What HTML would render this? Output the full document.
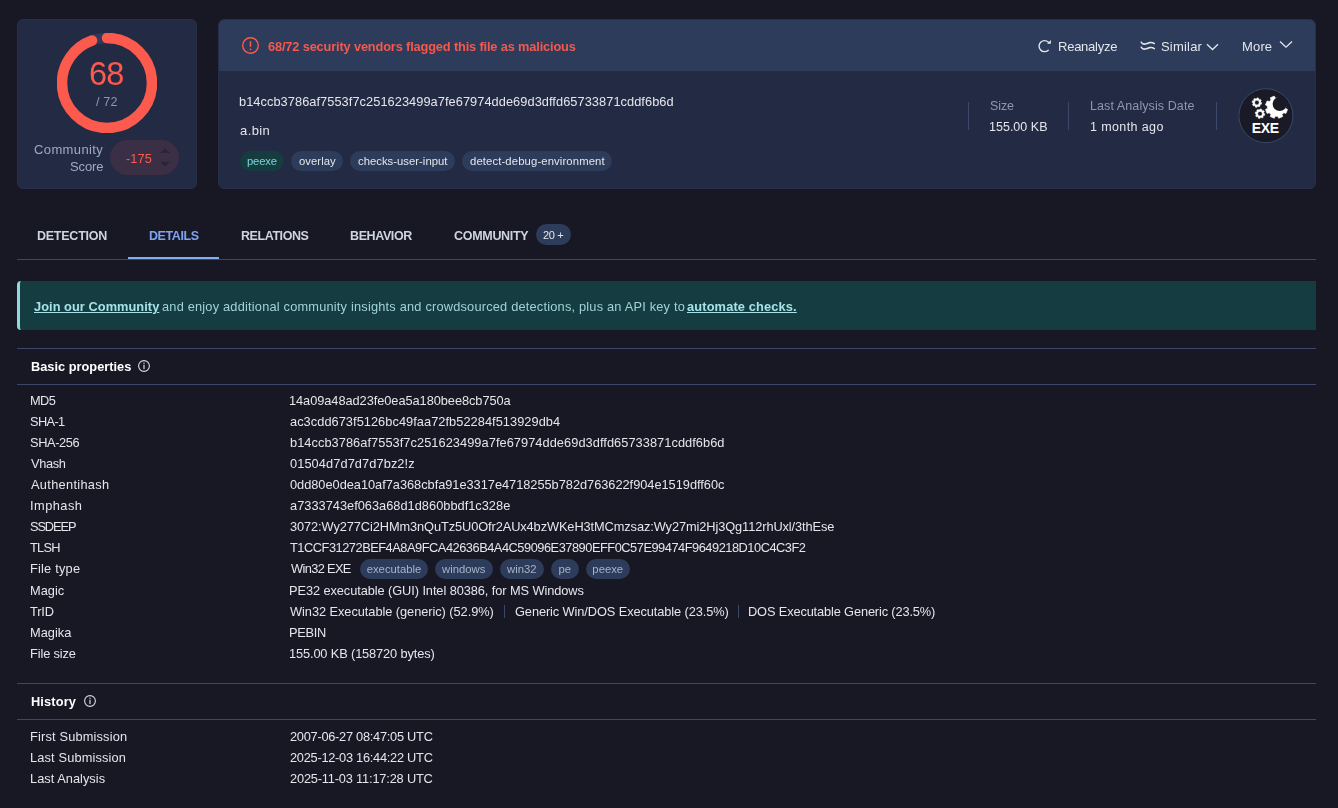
<!DOCTYPE html>
<html><head><meta charset="utf-8"><title>VirusTotal - File</title>
<style>
html,body{margin:0;padding:0;}
body{width:1338px;height:808px;overflow:hidden;background:#181724;position:relative;font-family:"Liberation Sans",sans-serif;}
.t{position:absolute;white-space:nowrap;will-change:transform;}
.box,.abs{position:absolute;}
</style></head><body>
<div class="box" style="left:17px;top:19px;width:180px;height:170px;background:#232a43;border-radius:6px;border:1px solid #262e49;box-sizing:border-box"></div>
<svg class="abs" style="left:57px;top:33px" width="100" height="100" viewBox="0 0 100 100">
<circle cx="50" cy="50" r="45" fill="none" stroke="#2e3a58" stroke-width="10.5"/>
<circle cx="50" cy="50" r="45" fill="none" stroke="#fd5a4e" stroke-width="10.5" stroke-linecap="round" stroke-dasharray="267.04 282.74" transform="rotate(-90 50 50)"/>
</svg>
<div class="t" style="left:89.38px;top:52.54px;font-size:32.5px;line-height:42px;font-weight:normal;color:#fd5a4e;letter-spacing:-0.850px;">68</div>
<div class="t" style="left:96.20px;top:94.07px;font-size:12.5px;line-height:16px;font-weight:normal;color:#8e97b1;letter-spacing:0.204px;">/ 72</div>
<div class="t" style="left:34.35px;top:141.10px;font-size:13px;line-height:17px;font-weight:normal;color:#a2aac0;letter-spacing:0.379px;">Community</div>
<div class="t" style="left:70.22px;top:157.90px;font-size:13px;line-height:17px;font-weight:normal;color:#a2aac0;letter-spacing:-0.131px;">Score</div>
<div class="box" style="left:110px;top:140px;width:69px;height:35px;background:#3a2f45;border-radius:18px"></div>
<div class="t" style="left:125.62px;top:150.36px;font-size:12.8px;line-height:17px;font-weight:normal;color:#fd5a4e;letter-spacing:0.096px;">-175</div>
<svg class="abs" style="left:159px;top:147px" width="12" height="21" viewBox="0 0 12 21"><path d="M1 6 L6 1.5 L11 6Z" fill="#2a2535"/><path d="M1 14.8 L6 19.5 L11 14.8Z" fill="#2a2535"/></svg>
<div class="box" style="left:218px;top:19px;width:1098px;height:170px;background:#232a43;border-radius:6px;overflow:hidden;border:1px solid #262e49;box-sizing:border-box"><div style="position:absolute;left:0;top:0;right:0;height:51px;background:#2d3c5b;border-bottom:1px solid #232b41"></div></div>
<svg class="abs" style="left:241px;top:36px" width="19" height="19" viewBox="0 0 19 19"><circle cx="9.5" cy="9.5" r="7.8" fill="none" stroke="#fd5a4e" stroke-width="1.4"/><path d="M9.5 5.2 V10.8" stroke="#fd5a4e" stroke-width="1.5"/><circle cx="9.5" cy="13.3" r="0.9" fill="#fd5a4e"/></svg>
<div class="t" style="left:267.95px;top:38.06px;font-size:12.8px;line-height:17px;font-weight:bold;color:#f5584d;letter-spacing:-0.152px;">68/72 security vendors flagged this file as malicious</div>
<svg class="abs" style="left:1037px;top:39px" width="16" height="15" viewBox="0 0 16 15"><path d="M11.28 11.19 A5.5 5.5 0 1 1 11.4 3.2" fill="none" stroke="#e4e6eb" stroke-width="1.4" stroke-linecap="round"/><path d="M13.9 1.1 V4.8 H10.1Z" fill="#e4e6eb"/></svg>
<div class="t" style="left:1058.26px;top:38.20px;font-size:13px;line-height:17px;font-weight:normal;color:#e4e6eb;letter-spacing:-0.246px;">Reanalyze</div>
<svg class="abs" style="left:1139px;top:40px" width="18" height="12" viewBox="0 0 18 12"><path d="M2.2 2.2 Q3.4 4.6 6.3 4 T11 2.5 Q13.6 2.2 15.3 3.6" fill="none" stroke="#e4e6eb" stroke-width="1.5" stroke-linecap="round"/><path d="M2.2 7.2 Q3.4 9.6 6.3 9 T11 7.5 Q13.6 7.2 15.3 8.6" fill="none" stroke="#e4e6eb" stroke-width="1.5" stroke-linecap="round"/></svg>
<div class="t" style="left:1160.62px;top:38.20px;font-size:13px;line-height:17px;font-weight:normal;color:#e4e6eb;letter-spacing:0.200px;">Similar</div>
<svg class="abs" style="left:1206px;top:43px" width="13" height="8" viewBox="0 0 13 8"><path d="M1 1.2 L6.5 6.5 L12 1.2" fill="none" stroke="#e4e6eb" stroke-width="1.3"/></svg>
<div class="t" style="left:1241.86px;top:38.20px;font-size:13px;line-height:17px;font-weight:normal;color:#e4e6eb;letter-spacing:0.162px;">More</div>
<svg class="abs" style="left:1279px;top:40px" width="14" height="9" viewBox="0 0 14 9"><path d="M1 1.5 L7 7.2 L13 1.5" fill="none" stroke="#e4e6eb" stroke-width="1.3"/></svg>
<div class="t" style="left:239.47px;top:93.46px;font-size:12.8px;line-height:17px;font-weight:normal;color:#e4e6eb;letter-spacing:0.057px;">b14ccb3786af7553f7c251623499a7fe67974dde69d3dffd65733871cddf6b6d</div>
<div class="t" style="left:239.88px;top:121.90px;font-size:13px;line-height:17px;font-weight:normal;color:#e4e6eb;letter-spacing:0.414px;">a.bin</div>
<div class="box" style="left:240px;top:151px;width:44px;height:20px;background:#153c3f;border-radius:10px"></div>
<div class="t" style="left:247.27px;top:153.58px;font-size:11.3px;line-height:15px;font-weight:normal;color:#80d2d8;letter-spacing:-0.202px;">peexe</div>
<div class="box" style="left:291px;top:151px;width:52px;height:20px;background:#2d3c5b;border-radius:10px"></div>
<div class="t" style="left:298.95px;top:153.58px;font-size:11.3px;line-height:15px;font-weight:normal;color:#e4e6eb;letter-spacing:0.052px;">overlay</div>
<div class="box" style="left:350px;top:151px;width:105px;height:20px;background:#2d3c5b;border-radius:10px"></div>
<div class="t" style="left:358.25px;top:153.58px;font-size:11.3px;line-height:15px;font-weight:normal;color:#e4e6eb;letter-spacing:0.016px;">checks-user-input</div>
<div class="box" style="left:462px;top:151px;width:150px;height:20px;background:#2d3c5b;border-radius:10px"></div>
<div class="t" style="left:470.05px;top:153.58px;font-size:11.3px;line-height:15px;font-weight:normal;color:#e4e6eb;letter-spacing:0.119px;">detect-debug-environment</div>
<div class="box" style="left:968px;top:102px;width:1px;height:28px;background:#3b4869"></div>
<div class="box" style="left:1068px;top:102px;width:1px;height:28px;background:#3b4869"></div>
<div class="box" style="left:1216px;top:102px;width:1px;height:28px;background:#3b4869"></div>
<div class="t" style="left:989.84px;top:98.07px;font-size:12.5px;line-height:16px;font-weight:normal;color:#8e97b1;letter-spacing:-0.117px;">Size</div>
<div class="t" style="left:989.46px;top:118.97px;font-size:12.5px;line-height:16px;font-weight:normal;color:#e4e6eb;letter-spacing:0.011px;">155.00 KB</div>
<div class="t" style="left:1090.30px;top:98.07px;font-size:12.5px;line-height:16px;font-weight:normal;color:#8e97b1;letter-spacing:0.093px;">Last Analysis Date</div>
<div class="t" style="left:1090.36px;top:118.97px;font-size:12.5px;line-height:16px;font-weight:normal;color:#e4e6eb;letter-spacing:0.384px;">1 month ago</div>
<svg class="abs" style="left:1238px;top:88px" width="56" height="56" viewBox="0 0 56 56">
<defs><mask id="m1"><rect width="56" height="56" fill="#fff"/><circle cx="41.7" cy="15.9" r="7.1" fill="#000"/><path d="M41.7 0 H56 V18 H41.7Z M38.6 0 H56 V9.3 H38.6Z" fill="#000"/></mask></defs>
<circle cx="27.9" cy="27.7" r="27" fill="#1a1a26" stroke="#3a4868" stroke-width="1"/>
<path fill="#fff" fill-rule="evenodd" stroke="#fff" stroke-width="0.5" stroke-linejoin="round" d="M22.79 14.38 L23.70 14.71 L23.36 16.37 L22.40 16.31 L21.81 17.20 L22.21 18.07 L20.81 19.00 L20.16 18.29 L19.12 18.49 L18.79 19.40 L17.13 19.06 L17.19 18.10 L16.30 17.51 L15.43 17.91 L14.50 16.51 L15.21 15.86 L15.01 14.82 L14.10 14.49 L14.44 12.83 L15.40 12.89 L15.99 12.00 L15.59 11.13 L16.99 10.20 L17.64 10.91 L18.68 10.71 L19.01 9.80 L20.67 10.14 L20.61 11.10 L21.50 11.69 L22.37 11.29 L23.30 12.69 L22.59 13.34ZM16.60 14.60 a2.3 2.3 0 1 0 4.60 0 a2.3 2.3 0 1 0 -4.60 0Z"/>
<path fill="#fff" fill-rule="evenodd" stroke="#fff" stroke-width="0.5" stroke-linejoin="round" d="M25.89 25.48 L26.80 25.81 L26.46 27.47 L25.50 27.41 L24.91 28.30 L25.31 29.17 L23.91 30.10 L23.26 29.39 L22.22 29.59 L21.89 30.50 L20.23 30.16 L20.29 29.20 L19.40 28.61 L18.53 29.01 L17.60 27.61 L18.31 26.96 L18.11 25.92 L17.20 25.59 L17.54 23.93 L18.50 23.99 L19.09 23.10 L18.69 22.23 L20.09 21.30 L20.74 22.01 L21.78 21.81 L22.11 20.90 L23.77 21.24 L23.71 22.20 L24.60 22.79 L25.47 22.39 L26.40 23.79 L25.69 24.44ZM19.70 25.70 a2.3 2.3 0 1 0 4.60 0 a2.3 2.3 0 1 0 -4.60 0Z"/>
<path fill="#fff" stroke="#fff" stroke-width="0.6" stroke-linejoin="round" d="M47.62 20.42 L49.58 21.40 L47.90 25.48 L45.81 24.78 L44.08 26.51 L44.78 28.60 L40.70 30.28 L39.72 28.32 L37.28 28.32 L36.30 30.28 L32.22 28.60 L32.92 26.51 L31.19 24.78 L29.10 25.48 L27.42 21.40 L29.38 20.42 L29.38 17.98 L27.42 17.00 L29.10 12.92 L31.19 13.62 L32.92 11.89 L32.22 9.80 L36.30 8.12 L37.28 10.08 L39.72 10.08 L40.70 8.12 L44.78 9.80 L44.08 11.89 L45.81 13.62 L47.90 12.92 L49.58 17.00 L47.62 17.98Z" mask="url(#m1)"/>
<text x="27.3" y="44.7" font-family="Liberation Sans" font-weight="bold" font-size="14" fill="#fff" text-anchor="middle" letter-spacing="-0.3">EXE</text>
</svg>
<div class="t" style="left:37.49px;top:227.77px;font-size:12.5px;line-height:16px;font-weight:bold;color:#cfd4df;letter-spacing:-0.245px;">DETECTION</div>
<div class="t" style="left:149.09px;top:227.77px;font-size:12.5px;line-height:16px;font-weight:bold;color:#7ea3f2;letter-spacing:-0.425px;">DETAILS</div>
<div class="t" style="left:240.59px;top:227.77px;font-size:12.5px;line-height:16px;font-weight:bold;color:#cfd4df;letter-spacing:-0.425px;">RELATIONS</div>
<div class="t" style="left:350.19px;top:227.77px;font-size:12.5px;line-height:16px;font-weight:bold;color:#cfd4df;letter-spacing:-0.391px;">BEHAVIOR</div>
<div class="t" style="left:454.30px;top:227.77px;font-size:12.5px;line-height:16px;font-weight:bold;color:#cfd4df;letter-spacing:-0.297px;">COMMUNITY</div>
<div class="box" style="left:536px;top:224px;width:35px;height:21px;background:#2d3c5b;border-radius:10.5px"></div>
<div class="t" style="left:543.35px;top:227.69px;font-size:11px;line-height:14px;font-weight:normal;color:#e4e6eb;letter-spacing:-0.308px;">20 +</div>
<div class="box" style="left:17px;top:259px;width:1299px;height:1px;background:#3b4869"></div>
<div class="box" style="left:128px;top:257px;width:91px;height:2px;background:#85adf6"></div>
<div class="box" style="left:17px;top:281px;width:1299px;height:49px;background:#153c40;border-radius:4px 0 0 4px;border-left:3px solid #8ed8df;box-sizing:border-box"></div>
<div class="t" style="left:34.41px;top:297.96px;font-size:12.8px;line-height:17px;font-weight:bold;color:#a6e3e8;letter-spacing:0.049px;text-decoration:underline;text-underline-offset:1px">Join our Community</div>
<div class="t" style="left:162.39px;top:297.96px;font-size:12.8px;line-height:17px;font-weight:normal;color:#9fd3d7;letter-spacing:0.198px;">and enjoy additional community insights and crowdsourced detections, plus an API key to</div>
<div class="t" style="left:687.32px;top:297.96px;font-size:12.8px;line-height:17px;font-weight:bold;color:#a6e3e8;letter-spacing:0.148px;text-decoration:underline;text-underline-offset:1px">automate checks.</div>
<div class="box" style="left:17px;top:348px;width:1299px;height:1px;background:#3b4869"></div>
<div class="box" style="left:17px;top:384px;width:1299px;height:1px;background:#3b4869"></div>
<div class="t" style="left:30.57px;top:358.36px;font-size:12.8px;line-height:17px;font-weight:bold;color:#ffffff;letter-spacing:0.004px;">Basic properties</div>
<svg class="abs" style="left:137px;top:359px" width="14" height="14" viewBox="0 0 14 14"><circle cx="7" cy="7" r="5.4" fill="none" stroke="#d8dbe3" stroke-width="1.1"/><path d="M7 5.8 V10" stroke="#d8dbe3" stroke-width="1.2"/><circle cx="7" cy="4.2" r=".7" fill="#d8dbe3"/></svg>
<div class="t" style="left:29.68px;top:392.06px;font-size:12.8px;line-height:17px;font-weight:normal;color:#e4e6eb;letter-spacing:-0.536px;">MD5</div>
<div class="t" style="left:289.44px;top:392.06px;font-size:12.8px;line-height:17px;font-weight:normal;color:#e4e6eb;letter-spacing:-0.056px;">14a09a48ad23fe0ea5a180bee8cb750a</div>
<div class="t" style="left:30.12px;top:413.06px;font-size:12.8px;line-height:17px;font-weight:normal;color:#e4e6eb;letter-spacing:-0.636px;">SHA-1</div>
<div class="t" style="left:289.89px;top:413.06px;font-size:12.8px;line-height:17px;font-weight:normal;color:#e4e6eb;letter-spacing:0.046px;">ac3cdd673f5126bc49faa72fb52284f513929db4</div>
<div class="t" style="left:30.12px;top:434.06px;font-size:12.8px;line-height:17px;font-weight:normal;color:#e4e6eb;letter-spacing:-0.386px;">SHA-256</div>
<div class="t" style="left:289.57px;top:434.06px;font-size:12.8px;line-height:17px;font-weight:normal;color:#e4e6eb;letter-spacing:0.055px;">b14ccb3786af7553f7c251623499a7fe67974dde69d3dffd65733871cddf6b6d</div>
<div class="t" style="left:30.64px;top:455.06px;font-size:12.8px;line-height:17px;font-weight:normal;color:#e4e6eb;letter-spacing:-0.364px;">Vhash</div>
<div class="t" style="left:289.89px;top:455.06px;font-size:12.8px;line-height:17px;font-weight:normal;color:#e4e6eb;letter-spacing:0.089px;">01504d7d7d7d7bz2!z</div>
<div class="t" style="left:30.70px;top:476.06px;font-size:12.8px;line-height:17px;font-weight:normal;color:#e4e6eb;letter-spacing:0.307px;">Authentihash</div>
<div class="t" style="left:289.89px;top:476.06px;font-size:12.8px;line-height:17px;font-weight:normal;color:#e4e6eb;letter-spacing:-0.026px;">0dd80e0dea10af7a368cbfa91e3317e4718255b782d763622f904e1519dff60c</div>
<div class="t" style="left:29.55px;top:497.06px;font-size:12.8px;line-height:17px;font-weight:normal;color:#e4e6eb;letter-spacing:0.472px;">Imphash</div>
<div class="t" style="left:289.89px;top:497.06px;font-size:12.8px;line-height:17px;font-weight:normal;color:#e4e6eb;letter-spacing:0.011px;">a7333743ef063a68d1d860bbdf1c328e</div>
<div class="t" style="left:30.12px;top:518.06px;font-size:12.8px;line-height:17px;font-weight:normal;color:#e4e6eb;letter-spacing:-1.098px;">SSDEEP</div>
<div class="t" style="left:289.95px;top:518.06px;font-size:12.8px;line-height:17px;font-weight:normal;color:#e4e6eb;letter-spacing:-0.093px;">3072:Wy277Ci2HMm3nQuTz5U0Ofr2AUx4bzWKeH3tMCmzsaz:Wy27mi2Hj3Qg112rhUxl/3thEse</div>
<div class="t" style="left:30.44px;top:539.06px;font-size:12.8px;line-height:17px;font-weight:normal;color:#e4e6eb;letter-spacing:-0.775px;">TLSH</div>
<div class="t" style="left:290.14px;top:539.06px;font-size:12.8px;line-height:17px;font-weight:normal;color:#e4e6eb;letter-spacing:-0.468px;">T1CCF31272BEF4A8A9FCA42636B4A4C59096E37890EFF0C57E99474F9649218D10C4C3F2</div>
<div class="t" style="left:29.68px;top:560.06px;font-size:12.8px;line-height:17px;font-weight:normal;color:#e4e6eb;letter-spacing:0.206px;">File type</div>
<div class="t" style="left:290.54px;top:560.06px;font-size:12.8px;line-height:17px;font-weight:normal;color:#e4e6eb;letter-spacing:-0.629px;">Win32 EXE</div>
<div class="box" style="left:360px;top:559px;width:68.0px;height:20px;background:#2d3c5b;border-radius:10px"></div>
<div class="t" style="left:360px;width:68.0px;text-align:center;top:559.08px;font-size:11.3px;line-height:20px;color:#a9b3c9">executable</div>
<div class="box" style="left:435px;top:559px;width:57.5px;height:20px;background:#2d3c5b;border-radius:10px"></div>
<div class="t" style="left:435px;width:57.5px;text-align:center;top:559.08px;font-size:11.3px;line-height:20px;color:#a9b3c9">windows</div>
<div class="box" style="left:500px;top:559px;width:43.6px;height:20px;background:#2d3c5b;border-radius:10px"></div>
<div class="t" style="left:500px;width:43.6px;text-align:center;top:559.08px;font-size:11.3px;line-height:20px;color:#a9b3c9">win32</div>
<div class="box" style="left:551px;top:559px;width:27.6px;height:20px;background:#2d3c5b;border-radius:10px"></div>
<div class="t" style="left:551px;width:27.6px;text-align:center;top:559.08px;font-size:11.3px;line-height:20px;color:#a9b3c9">pe</div>
<div class="box" style="left:586.2px;top:559px;width:43.5px;height:20px;background:#2d3c5b;border-radius:10px"></div>
<div class="t" style="left:586.2px;width:43.5px;text-align:center;top:559.08px;font-size:11.3px;line-height:20px;color:#a9b3c9">peexe</div>
<div class="t" style="left:29.68px;top:582.06px;font-size:12.8px;line-height:17px;font-weight:normal;color:#e4e6eb;letter-spacing:0.017px;">Magic</div>
<div class="t" style="left:289.38px;top:582.06px;font-size:12.8px;line-height:17px;font-weight:normal;color:#e4e6eb;letter-spacing:-0.080px;">PE32 executable (GUI) Intel 80386, for MS Windows</div>
<div class="t" style="left:30.44px;top:603.06px;font-size:12.8px;line-height:17px;font-weight:normal;color:#e4e6eb;letter-spacing:-0.151px;">TrID</div>
<div class="t" style="left:290.34px;top:603.06px;font-size:12.8px;line-height:17px;font-weight:normal;color:#e4e6eb;letter-spacing:-0.053px;">Win32 Executable (generic) (52.9%)</div>
<div class="box" style="left:504px;top:605px;width:1px;height:13px;background:#3b4869"></div>
<div class="t" style="left:514.56px;top:603.06px;font-size:12.8px;line-height:17px;font-weight:normal;color:#e4e6eb;letter-spacing:-0.096px;">Generic Win/DOS Executable (23.5%)</div>
<div class="box" style="left:738px;top:605px;width:1px;height:13px;background:#3b4869"></div>
<div class="t" style="left:748.28px;top:603.06px;font-size:12.8px;line-height:17px;font-weight:normal;color:#e4e6eb;letter-spacing:-0.137px;">DOS Executable Generic (23.5%)</div>
<div class="t" style="left:29.68px;top:624.06px;font-size:12.8px;line-height:17px;font-weight:normal;color:#e4e6eb;letter-spacing:0.009px;">Magika</div>
<div class="t" style="left:289.38px;top:624.06px;font-size:12.8px;line-height:17px;font-weight:normal;color:#e4e6eb;letter-spacing:-0.288px;">PEBIN</div>
<div class="t" style="left:29.68px;top:645.06px;font-size:12.8px;line-height:17px;font-weight:normal;color:#e4e6eb;letter-spacing:-0.122px;">File size</div>
<div class="t" style="left:289.44px;top:645.06px;font-size:12.8px;line-height:17px;font-weight:normal;color:#e4e6eb;letter-spacing:-0.132px;">155.00 KB (158720 bytes)</div>
<div class="box" style="left:17px;top:683px;width:1299px;height:1px;background:#3b4869"></div>
<div class="box" style="left:17px;top:719px;width:1299px;height:1px;background:#3b4869"></div>
<div class="t" style="left:30.57px;top:693.36px;font-size:12.8px;line-height:17px;font-weight:bold;color:#ffffff;letter-spacing:0.133px;">History</div>
<svg class="abs" style="left:83px;top:694px" width="14" height="14" viewBox="0 0 14 14"><circle cx="7" cy="7" r="5.4" fill="none" stroke="#d8dbe3" stroke-width="1.1"/><path d="M7 5.8 V10" stroke="#d8dbe3" stroke-width="1.2"/><circle cx="7" cy="4.2" r=".7" fill="#d8dbe3"/></svg>
<div class="t" style="left:29.68px;top:728.06px;font-size:12.8px;line-height:17px;font-weight:normal;color:#e4e6eb;letter-spacing:0.167px;">First Submission</div>
<div class="t" style="left:289.76px;top:728.06px;font-size:12.8px;line-height:17px;font-weight:normal;color:#e4e6eb;letter-spacing:-0.263px;">2007-06-27 08:47:05 UTC</div>
<div class="t" style="left:29.68px;top:749.06px;font-size:12.8px;line-height:17px;font-weight:normal;color:#e4e6eb;letter-spacing:0.143px;">Last Submission</div>
<div class="t" style="left:289.76px;top:749.06px;font-size:12.8px;line-height:17px;font-weight:normal;color:#e4e6eb;letter-spacing:-0.263px;">2025-12-03 16:44:22 UTC</div>
<div class="t" style="left:29.68px;top:770.06px;font-size:12.8px;line-height:17px;font-weight:normal;color:#e4e6eb;letter-spacing:0.032px;">Last Analysis</div>
<div class="t" style="left:289.76px;top:770.06px;font-size:12.8px;line-height:17px;font-weight:normal;color:#e4e6eb;letter-spacing:-0.179px;">2025-11-03 11:17:28 UTC</div>
</body></html>
